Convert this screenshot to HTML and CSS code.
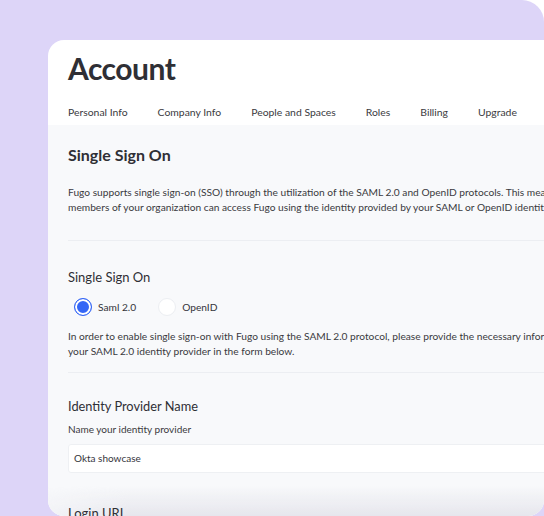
FILE: index.html
```html
<!DOCTYPE html>
<html lang="en">
<head>
<meta charset="utf-8">
<title>Account</title>
<link rel="stylesheet" href="styles.css">
</head>
<body>
<div class="stage">
  <div class="card">
    <header class="header">
      <h1 class="title">Account</h1>
      <nav class="tabs">
        <span class="tab">Personal Info</span>
        <span class="tab">Company Info</span>
        <span class="tab">People and Spaces</span>
        <span class="tab">Roles</span>
        <span class="tab">Billing</span>
        <span class="tab">Upgrade</span>
      </nav>
    </header>
    <main class="content">
      <h2 class="section-title">Single Sign On</h2>
      <p class="text intro">Fugo supports single sign-on (SSO) through the utilization of the SAML 2.0 and OpenID protocols. This means that members of your organization can access Fugo using the identity provided by your SAML or OpenID identity provider.</p>
      <hr class="divider">
      <h3 class="label">Single Sign On</h3>
      <div class="radios">
        <label class="radio"><span class="dot checked"></span>Saml 2.0</label>
        <label class="radio"><span class="dot"></span>OpenID</label>
      </div>
      <p class="text">In order to enable single sign-on with Fugo using the SAML 2.0 protocol, please provide the necessary information about your SAML 2.0 identity provider in the form below.</p>
      <hr class="divider second">
      <h3 class="label idp">Identity Provider Name</h3>
      <p class="hint">Name your identity provider</p>
      <div class="input">Okta showcase</div>
      <h3 class="label login">Login URL</h3>
    </main>
    <div class="fade"></div>
  </div>
</div>
</body>
</html>
```
FILE: styles.css
```css
* { box-sizing: border-box; }
html, body { margin: 0; padding: 0; }
body {
  background: #ffffff;
  font-family: Lato, "Noto Sans", sans-serif;
  color: #34343a;
  width: 544px;
  height: 516px;
  overflow: hidden;
}
.stage {
  width: 544px;
  height: 516px;
  background: #ddd5f8;
  border-top-right-radius: 22px;
  padding: 40px 0 0 48px;
  overflow: hidden;
}
.card {
  position: relative;
  width: 496px;
  height: 476px;
  background: #ffffff;
  border-radius: 16px 0 16px 16px;
  overflow: hidden;
  display: flex;
  flex-direction: column;
}
.header {
  flex: 0 0 85px;
  padding: 10px 20px 0 20px;
}
.title {
  margin: 0;
  font-size: 30px;
  font-weight: 700;
  line-height: 36px;
  color: #2f2f35;
  letter-spacing: -0.5px;
}
.tabs {
  display: flex;
  gap: 30px;
  margin-top: 19px;
  font-size: 10.4px;
  line-height: 14px;
  color: #3a3a40;
  white-space: nowrap;
}
.content {
  flex: 1 1 auto;
  min-height: 0;
  background: #f8f9fb;
  padding: 20px 0 0 20px;
  white-space: nowrap;
}
.section-title {
  margin: 0;
  font-size: 16px;
  font-weight: 700;
  line-height: 20px;
  color: #2f2f35;
}
.text {
  margin: 22px 0 0 0;
  font-size: 10.2px;
  line-height: 15px;
  color: #3a3a40;
  white-space: normal;
  width: 540px;
}
.intro { margin-top: 20px; }
.divider {
  border: 0;
  border-top: 1px solid #eceef2;
  margin: 25px 0 0 0;
}
.divider.second { margin-top: 13px; }
.label {
  margin: 27px 0 0 0;
  font-size: 13px;
  font-weight: 400;
  line-height: 18px;
  color: #2f2f35;
}
.radios {
  display: flex;
  gap: 22px;
  margin-top: 12px;
  padding-left: 6px;
  font-size: 10.2px;
  color: #34343a;
}
.radio {
  display: flex;
  align-items: center;
  gap: 6px;
}
.dot {
  width: 18px;
  height: 18px;
  border-radius: 50%;
  background: #ffffff;
  border: 1px solid #eceef2;
}
.dot.checked {
  background: #3466f6;
  border: 1.5px solid #3466f6;
  box-shadow: inset 0 0 0 2px #ffffff;
}
.radios + .text { margin-top: 13px; }
.label.idp { margin-top: 24px; font-size: 12.8px; }
.hint {
  margin: 7px 0 0 0;
  font-size: 10px;
  line-height: 14px;
  color: #3a3a40;
}
.input {
  margin-top: 8px;
  height: 29px;
  width: 520px;
  background: #ffffff;
  border: 1px solid #eef0f3;
  border-radius: 3px;
  padding-left: 5px;
  font-size: 10px;
  line-height: 27px;
  color: #34343a;
}
.label.login {
  position: relative;
  z-index: 2;
  margin-top: 31px;
}
.fade {
  position: absolute;
  left: 0;
  right: 0;
  bottom: 0;
  height: 30px;
  z-index: 1;
  background: linear-gradient(to bottom, rgba(240,240,245,0), rgba(222,222,230,0.7));
  -webkit-mask-image: linear-gradient(to right, rgba(0,0,0,0.3) 0, rgba(0,0,0,1) 80px);
  mask-image: linear-gradient(to right, rgba(0,0,0,0.3) 0, rgba(0,0,0,1) 80px);
  pointer-events: none;
}
```
